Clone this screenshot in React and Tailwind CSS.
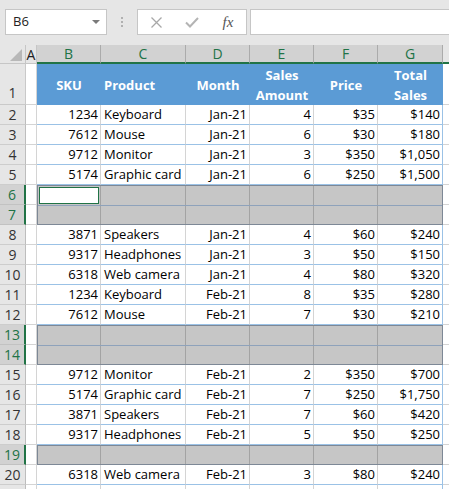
import React from 'react'

// column widths for B..G (data rows) and inside a selection block (1px less at each edge)
const cellW = ['w-[64px]', 'w-[85px]', 'w-[64px]', 'w-[64px]', 'w-[64px]', 'w-[65px]']
const blockW = ['w-[63px]', 'w-[85px]', 'w-[64px]', 'w-[64px]', 'w-[64px]', 'w-[64px]']
const align = [
  'justify-end pr-[2px]',
  'justify-start pl-[3px]',
  'justify-end pr-[2px]',
  'justify-end pr-[2px]',
  'justify-end pr-[2px]',
  'justify-end pr-[2px]',
]
const letters = ['B', 'C', 'D', 'E', 'F', 'G']

const headers = [
  { t: ['SKU'], a: 'justify-center' },
  { t: ['Product'], a: 'justify-start pl-[3px]' },
  { t: ['Month'], a: 'justify-center' },
  { t: ['Sales', 'Amount'], a: 'justify-center' },
  { t: ['Price'], a: 'justify-center' },
  { t: ['Total', 'Sales'], a: 'justify-center' },
]

const segments = [
  {
    type: 'rows',
    rows: [
      { n: 2, d: ['1234', 'Keyboard', 'Jan-21', '4', '$35', '$140'] },
      { n: 3, d: ['7612', 'Mouse', 'Jan-21', '6', '$30', '$180'] },
      { n: 4, d: ['9712', 'Monitor', 'Jan-21', '3', '$350', '$1,050'] },
      { n: 5, d: ['5174', 'Graphic card', 'Jan-21', '6', '$250', '$1,500'] },
    ],
  },
  { type: 'block', rows: [{ n: 6 }, { n: 7 }], active: true },
  {
    type: 'rows',
    rows: [
      { n: 8, d: ['3871', 'Speakers', 'Jan-21', '4', '$60', '$240'] },
      { n: 9, d: ['9317', 'Headphones', 'Jan-21', '3', '$50', '$150'] },
      { n: 10, d: ['6318', 'Web camera', 'Jan-21', '4', '$80', '$320'] },
      { n: 11, d: ['1234', 'Keyboard', 'Feb-21', '8', '$35', '$280'] },
      { n: 12, d: ['7612', 'Mouse', 'Feb-21', '7', '$30', '$210'] },
    ],
  },
  { type: 'block', rows: [{ n: 13 }, { n: 14 }] },
  {
    type: 'rows',
    rows: [
      { n: 15, d: ['9712', 'Monitor', 'Feb-21', '2', '$350', '$700'] },
      { n: 16, d: ['5174', 'Graphic card', 'Feb-21', '7', '$250', '$1,750'] },
      { n: 17, d: ['3871', 'Speakers', 'Feb-21', '7', '$60', '$420'] },
      { n: 18, d: ['9317', 'Headphones', 'Feb-21', '5', '$50', '$250'] },
    ],
  },
  { type: 'block', rows: [{ n: 19 }] },
  {
    type: 'rows',
    rows: [
      { n: 20, d: ['6318', 'Web camera', 'Feb-21', '3', '$80', '$240'] },
      // row 21 is only a few pixels tall at the bottom edge
      { n: 21, d: ['', '', '', '', '', ''], blank: true },
    ],
  },
]

const allRows = segments.flatMap((s) =>
  s.rows.map((r) => ({ n: r.n, sel: s.type === 'block', blank: r.blank }))
)

function Toolbar() {
  return (
    <div className="h-[45px] bg-[#e6e6e6] flex items-start pt-[9px] font-['Open_Sans',sans-serif]">
      {/* Name box */}
      <div className="ml-[5px] w-[102px] h-[26px] bg-white border border-[#c6c6c6] flex items-center justify-between pl-[7px] pr-[6px]">
        <span className="text-[13px] text-[#222]">B6</span>
        <svg width="8" height="4" viewBox="0 0 8 4">
          <polygon points="0,0 8,0 4,4" fill="#7a7a7a" />
        </svg>
      </div>
      {/* grip dots */}
      <div className="ml-[14px] mt-[8px] flex flex-col gap-[2px]">
        <div className="w-[2px] h-[2px] bg-[#b0b0b0]" />
        <div className="w-[2px] h-[2px] bg-[#b0b0b0]" />
        <div className="w-[2px] h-[2px] bg-[#b0b0b0]" />
      </div>
      {/* cancel / enter / fx */}
      <div className="ml-[14px] w-[110px] h-[26px] bg-white border border-[#c6c6c6] flex items-center">
        <div className="w-[36px] flex justify-center">
          <svg width="11" height="11" viewBox="0 0 11 11">
            <path d="M0.5 0.5 L10.5 10.5 M10.5 0.5 L0.5 10.5" stroke="#a8a8a8" strokeWidth="1.3" fill="none" />
          </svg>
        </div>
        <div className="w-[36px] flex justify-center">
          <svg width="14" height="11" viewBox="0 0 14 11">
            <path d="M1 5.5 L5 9.5 L13 1" stroke="#b4b4b4" strokeWidth="2" fill="none" />
          </svg>
        </div>
        <div className="w-[36px] flex justify-center">
          <span className="font-['Liberation_Serif',serif] italic text-[15px] text-[#555] leading-none">fx</span>
        </div>
      </div>
      {/* formula input */}
      <div className="ml-[3px] flex-1 h-[26px] bg-white border border-r-0 border-[#c6c6c6]" />
    </div>
  )
}

function ColumnHeaders() {
  return (
    <div className="flex h-[19px] text-[14px] font-['Open_Sans',sans-serif]">
      <div className="w-[26px] h-full bg-[#e6e6e6] border-r border-b border-[#c6c6c6] flex items-end justify-end pr-[3px] pb-[2px]">
        <svg width="12" height="12" viewBox="0 0 12 12">
          <polygon points="12,0 12,12 0,12" fill="#b8b8b8" />
        </svg>
      </div>
      <div className="w-[11px] h-full bg-[#e6e6e6] border-r border-b border-[#c6c6c6] flex items-center justify-center text-[#222]">
        A
      </div>
      {letters.map((l, i) => (
        <div
          key={l}
          className={`${cellW[i]} h-full bg-[#d2d2d2] border-r border-r-[#ababab] border-b-2 border-b-[#217346] flex items-center justify-center text-[#217346]`}
        >
          {l}
        </div>
      ))}
      <div className="flex-1 h-full bg-[#e6e6e6] border-b-2 border-b-[#217346]" />
    </div>
  )
}

function RowHeaders() {
  return (
    <div className="w-[26px] flex flex-col text-[14px] font-['Open_Sans',sans-serif]">
      <div className="h-[41px] bg-[#e6e6e6] border-r border-b border-[#c9c9c9] flex items-end justify-center pb-[1px] text-[#333]">
        1
      </div>
      {allRows.map((r) => (
        <div
          key={r.n}
          className={
            r.sel
              ? 'h-[20px] shrink-0 bg-[#d2d2d2] border-b border-b-[#c2c2c2] border-r-2 border-r-[#217346] flex items-center justify-center text-[#217346]'
              : 'h-[20px] shrink-0 bg-[#e6e6e6] border-b border-b-[#cdcdcd] border-r border-r-[#bdbdbd] flex items-center justify-center text-[#333]'
          }
        >
          {r.blank ? '' : r.n}
        </div>
      ))}
    </div>
  )
}

function PlainColumn({ width }) {
  return (
    <div className={`${width} flex flex-col`}>
      <div className="h-[41px] shrink-0 bg-white border-r border-b border-[#d4d4d4]" />
      {allRows.map((r) => (
        <div key={r.n} className="h-[20px] shrink-0 bg-white border-r border-b border-[#d4d4d4]" />
      ))}
    </div>
  )
}

function DataRow({ r }) {
  return (
    <div className="flex h-[20px] shrink-0">
      {r.d.map((v, i) => (
        <div
          key={i}
          className={`${cellW[i]} ${align[i]} h-full flex items-center whitespace-nowrap border-b border-r ${
            r.blank ? 'border-b-[#d4d4d4]' : 'border-b-[#9bc2e6]'
          } ${i === 5 ? 'border-r-[#9bc2e6]' : 'border-r-[#d4d4d4]'}`}
        >
          {v}
        </div>
      ))}
    </div>
  )
}

function Block({ rows, active }) {
  return (
    <div
      className={`${rows.length === 2 ? 'h-[40px]' : 'h-[20px]'} shrink-0 flex flex-col border border-[#7d8896] bg-[#c6c6c6]`}
    >
      {rows.map((r, ri) => (
        <div
          key={r.n}
          className={`flex flex-1 ${ri < rows.length - 1 ? 'border-b border-b-[#8ea2bb]' : ''}`}
        >
          {blockW.map((w, i) => (
            <div
              key={i}
              className={`${w} h-full ${i < 5 ? 'border-r border-r-[#a3a3a3]' : ''} ${
                active && ri === 0 && i === 0 ? 'p-px' : ''
              }`}
            >
              {active && ri === 0 && i === 0 && (
                <div className="h-full bg-white border border-[#217346]" />
              )}
            </div>
          ))}
        </div>
      ))}
    </div>
  )
}

function Table() {
  return (
    <div className="w-[406px] flex flex-col text-[13px] text-black font-['Open_Sans',sans-serif]">
      <div className="flex h-[41px] shrink-0 bg-[#5b9bd5] text-white font-bold leading-[20px]">
        {headers.map((h, i) => (
          <div key={i} className={`${cellW[i]} ${h.a} h-full flex items-center`}>
            <div className="text-center">
              {h.t.map((line) => (
                <div key={line}>{line}</div>
              ))}
            </div>
          </div>
        ))}
      </div>
      {segments.map((s, si) =>
        s.type === 'rows' ? (
          s.rows.map((r) => <DataRow key={r.n} r={r} />)
        ) : (
          <Block key={si} rows={s.rows} active={s.active} />
        )
      )}
    </div>
  )
}

export default function App() {
  return (
    <div className="w-[449px] h-[489px] overflow-hidden bg-white">
      <Toolbar />
      <ColumnHeaders />
      <div className="flex">
        <RowHeaders />
        <PlainColumn width="w-[11px]" />
        <Table />
        <div className="flex-1 flex flex-col">
          <div className="h-[41px] shrink-0 bg-white border-b border-[#d4d4d4]" />
          {allRows.map((r) => (
            <div key={r.n} className="h-[20px] shrink-0 bg-white border-b border-[#d4d4d4]" />
          ))}
        </div>
      </div>
    </div>
  )
}
